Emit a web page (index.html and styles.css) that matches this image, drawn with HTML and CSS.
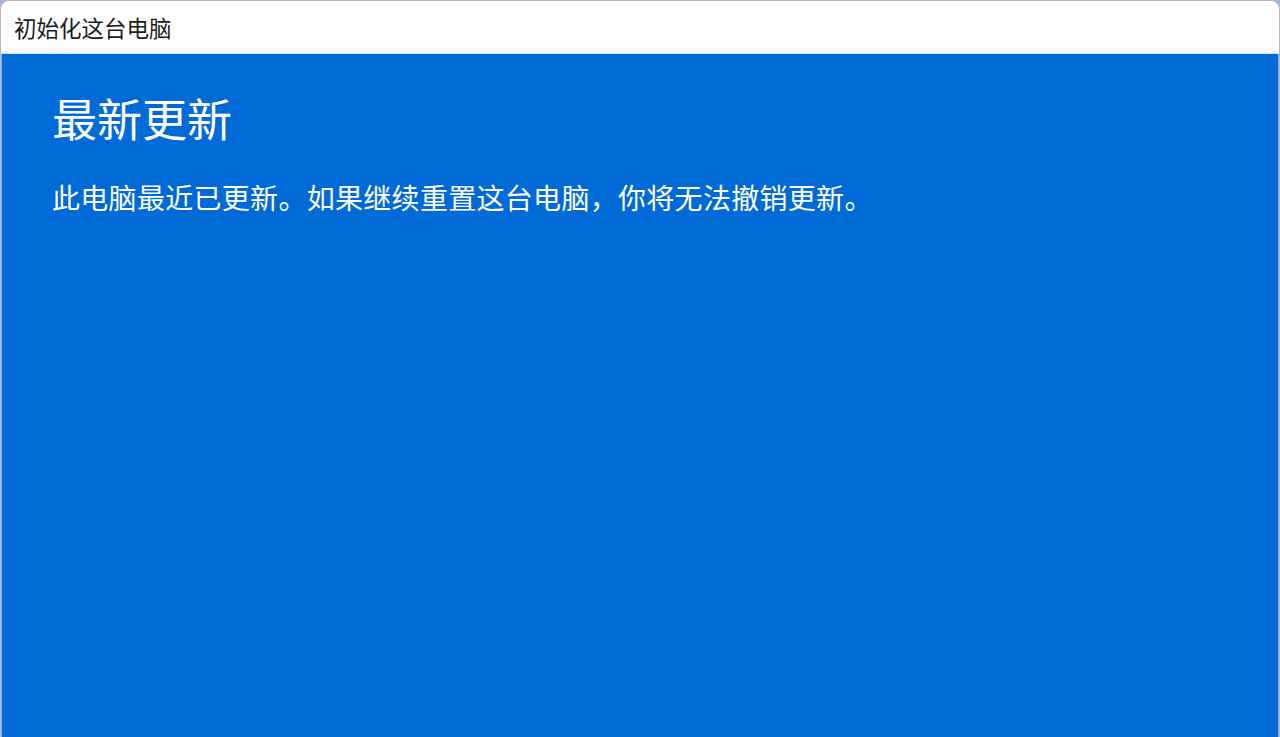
FILE: index.html
```html
<!DOCTYPE html>
<html lang="zh-CN">
<head>
    <meta charset="UTF-8">
    <meta name="viewport" content="width=device-width, initial-scale=1.0">
    <title>初始化这台电脑</title>
    <link rel="stylesheet" href="styles.css">
</head>
<body>

<!-- Reset dialog window -->
<div class="window">
    <div class="title-bar">初始化这台电脑</div>
    <div class="content">
        <h1>最新更新</h1>
        <p>此电脑最近已更新。如果继续重置这台电脑，你将无法撤销更新。</p>
    </div>
</div>

</body>
</html>
```

FILE: styles.css
```css
body {
    margin: 0;
    height: 100vh;
    background-color: #9fb8d6;
    font-family: "Noto Sans CJK SC", "Noto Sans", sans-serif;
}
.window {
    height: 100%;
    box-sizing: border-box;
    display: flex;
    flex-direction: column;
    border: 1px solid #b9b9b9;
    border-bottom: none;
    border-radius: 9px 9px 0 0;
    overflow: hidden;
    background-color: #ffffff;
}
.title-bar {
    height: 53px;
    display: flex;
    align-items: center;
    padding-left: 13px;
    font-size: 22.5px;
    color: #1c1c1c;
    border-bottom: 1px solid #d6e2ee;
    box-sizing: border-box;
}
.content {
    flex: 1;
    background-color: #006bd6;
    border-left: 1px solid #7fb0e8;
    border-right: 1px solid #7fb0e8;
    padding: 36px 50px;
    color: #ffffff;
}
.content h1 {
    margin: 0;
    font-size: 45px;
    font-weight: 400;
    line-height: 56px;
}
.content p {
    margin: 31px 0 0;
    font-size: 28px;
    letter-spacing: 0.3px;
    line-height: 40px;
}
```
